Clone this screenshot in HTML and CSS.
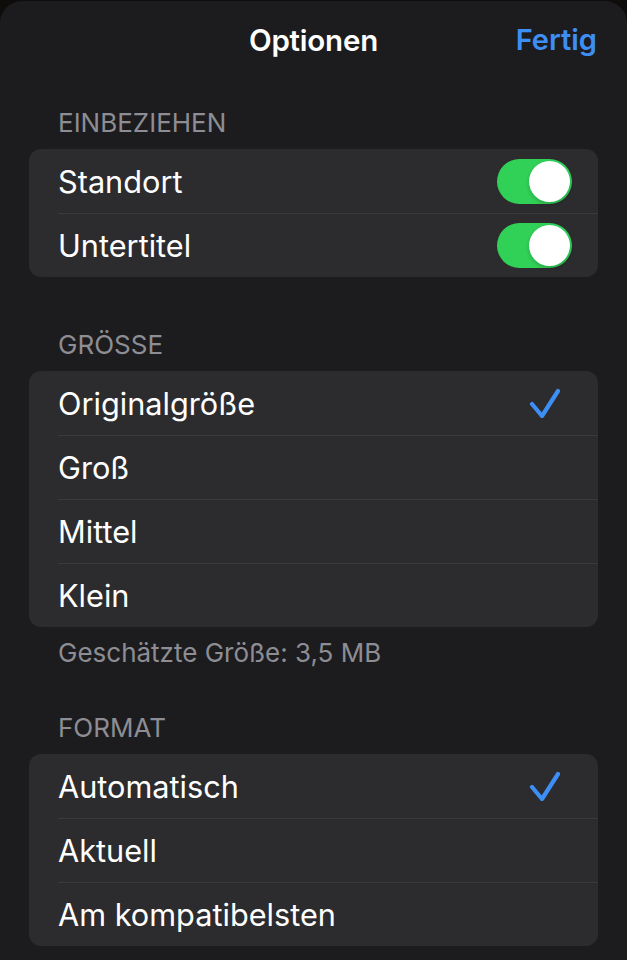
FILE: index.html
```html
<!DOCTYPE html>
<html lang="de">
<head>
    <meta charset="UTF-8" />
    <meta name="viewport" content="width=device-width, initial-scale=1.0" />
    <title>Optionen</title>
    <link rel="stylesheet" href="styles.css">
</head>
<body>
    <div class="sheet">
        <div class="navbar">
            <span></span>
            <h1>Optionen</h1>
            <button class="done">Fertig</button>
        </div>

        <div class="section">
            <div class="section-header">EINBEZIEHEN</div>
            <div class="group">
                <div class="row">
                    <span>Standort</span>
                    <span class="toggle on"><span class="knob"></span></span>
                </div>
                <div class="row">
                    <span>Untertitel</span>
                    <span class="toggle on"><span class="knob"></span></span>
                </div>
            </div>
        </div>

        <div class="section">
            <div class="section-header">GRÖSSE</div>
            <div class="group">
                <div class="row">
                    <span>Originalgröße</span>
                    <svg class="check" width="32" height="30" viewBox="0 0 32 30"><path d="M3 16 L13 28 L29 3" /></svg>
                </div>
                <div class="row"><span>Groß</span></div>
                <div class="row"><span>Mittel</span></div>
                <div class="row"><span>Klein</span></div>
            </div>
            <div class="section-footer">Geschätzte Größe: 3,5 MB</div>
        </div>

        <div class="section after-footer">
            <div class="section-header">FORMAT</div>
            <div class="group">
                <div class="row">
                    <span>Automatisch</span>
                    <svg class="check" width="32" height="30" viewBox="0 0 32 30"><path d="M3 16 L13 28 L29 3" /></svg>
                </div>
                <div class="row"><span>Aktuell</span></div>
                <div class="row"><span>Am kompatibelsten</span></div>
            </div>
        </div>
    </div>
</body>
</html>
```

FILE: styles.css
```css
body {
    margin: 0;
    background: #0e0d0c;
    font-family: Inter, "Liberation Sans", sans-serif;
    color: #fff;
}

.sheet {
    margin-top: 1px;
    min-height: 959px;
    background: #1c1c1e;
    border-radius: 22px 22px 0 0;
    padding: 0 29px;
    box-sizing: border-box;
}

.navbar {
    height: 79px;
    display: grid;
    grid-template-columns: 1fr auto 1fr;
    align-items: center;
}

.navbar h1 {
    margin: 0 0 2px;
    font-size: 29.5px;
    font-weight: 600;
    letter-spacing: -0.2px;
}

.done {
    justify-self: end;
    background: none;
    border: none;
    padding: 0;
    margin: 0 1px 2px 0;
    font-family: inherit;
    font-size: 29px;
    font-weight: 600;
    color: #3d8ef5;
    cursor: pointer;
}

.section-header,
.section-footer {
    padding-left: 29px;
    font-size: 26px;
    line-height: 30px;
    color: #8d8d93;
}

.section-header {
    padding-top: 28px;
    padding-bottom: 11px;
}

.section + .section {
    margin-top: 25px;
}

.section + .section.after-footer {
    margin-top: 17px;
}

.section-footer {
    padding-top: 11px;
}

.group {
    background: #2c2c2e;
    border-radius: 12px;
    overflow: hidden;
}

.row {
    height: 64px;
    margin-left: 29px;
    padding-right: 26px;
    box-sizing: border-box;
    display: flex;
    align-items: center;
    justify-content: space-between;
    font-size: 30.7px;
}

.row + .row {
    border-top: 1px solid #3a3a3c;
}

.toggle {
    width: 75px;
    height: 45px;
    border-radius: 23px;
    background: #31d158;
    position: relative;
}

.toggle .knob {
    position: absolute;
    top: 2px;
    right: 2px;
    width: 41px;
    height: 41px;
    border-radius: 50%;
    background: #fff;
    box-shadow: 0 2px 4px rgba(0,0,0,0.2);
}

.check {
    margin-right: 11px;
}

.check path {
    fill: none;
    stroke: #3d8ef5;
    stroke-width: 4.2;
    stroke-linecap: round;
    stroke-linejoin: round;
}
```
